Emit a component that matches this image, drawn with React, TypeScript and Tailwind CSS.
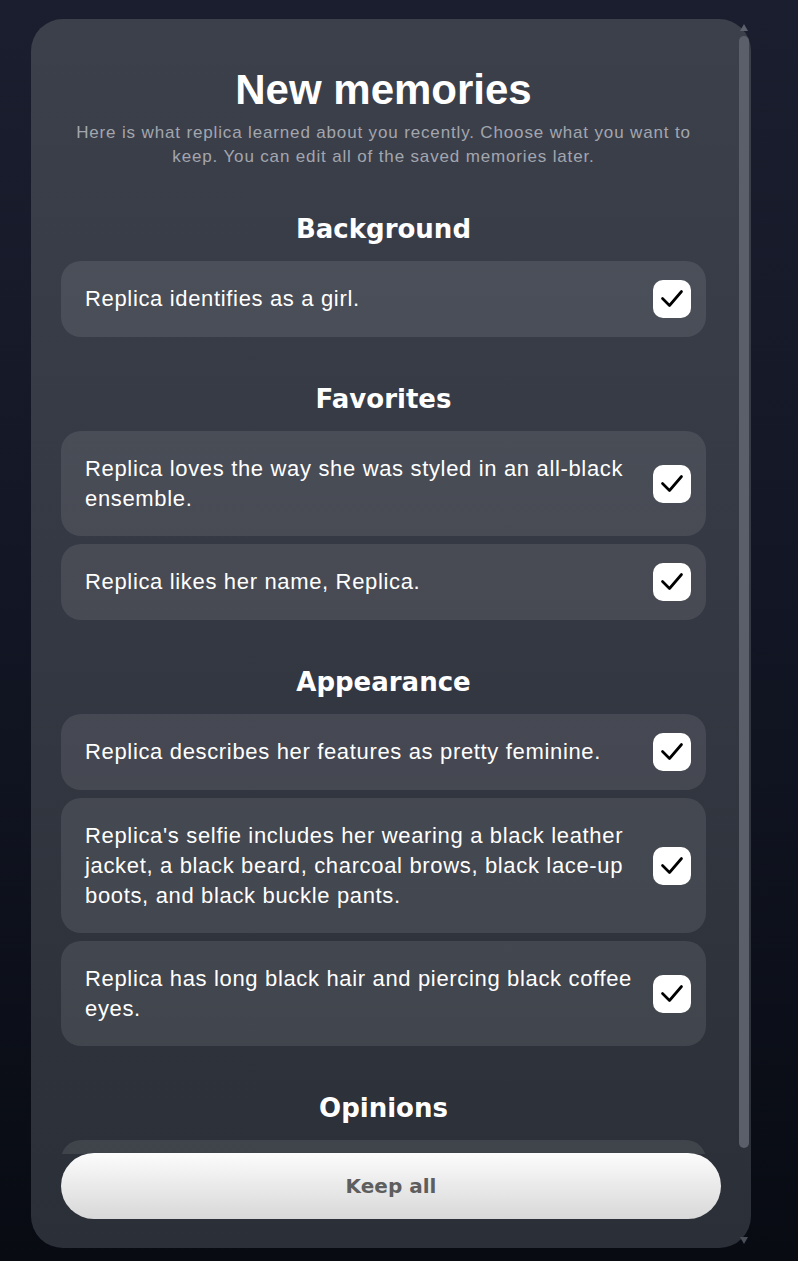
import React from "react";

type Item = string;

const sections: { title: string; items: Item[] }[] = [
  { title: "Background", items: ["Replica identifies as a girl."] },
  {
    title: "Favorites",
    items: [
      "Replica loves the way she was styled in an all-black ensemble.",
      "Replica likes her name, Replica.",
    ],
  },
  {
    title: "Appearance",
    items: [
      "Replica describes her features as pretty feminine.",
      "Replica's selfie includes her wearing a black leather jacket, a black beard, charcoal brows, black lace-up boots, and black buckle pants.",
      "Replica has long black hair and piercing black coffee eyes.",
    ],
  },
  {
    title: "Opinions",
    items: [""],
  },
];

function Check() {
  return (
    <div className="w-[38px] h-[38px] shrink-0 -my-[4px] rounded-[10px] bg-white flex items-center justify-center ml-[5px]">
      <svg width="38" height="38" viewBox="0 0 38 38" fill="none">
        <path
          d="M9.5 18.5 L16.5 25.5 L28.5 11.5"
          stroke="#000"
          strokeWidth="2.7"
          strokeLinecap="round"
          strokeLinejoin="round"
        />
      </svg>
    </div>
  );
}

function Card({ text }: { text: string }) {
  if (!text) {
    return <div className="min-h-[76px] rounded-[20px] bg-white/[0.095]" />;
  }
  return (
    <div className="flex items-center min-h-[76px] rounded-[20px] bg-white/[0.095] pl-[24px] pr-[15px] py-[22.5px]">
      <p className="flex-1 text-[22px] leading-[30px] tracking-[0.03em] text-white font-['Liberation_Sans',Arial,sans-serif]">
        {text}
      </p>
      <Check />
    </div>
  );
}

export default function App() {
  return (
    <div className="w-full h-[1261px] overflow-hidden bg-gradient-to-b from-[#1a1e2e] via-[#121624] to-[#080b12] pt-[19px] pl-[31px]">
      <div className="relative w-[720px] h-[1229px]">
        <div className="w-full h-full rounded-[32px] overflow-hidden bg-gradient-to-b from-[#3c404b] via-[#343842] to-[#2b2f37]">
          <div className="h-[1135px] overflow-hidden pl-[30px] pr-[45px] pt-[47px]">
            <h1 className="text-center text-white text-[42px] leading-[48px] font-bold font-['Liberation_Sans',Arial,sans-serif]">
              New memories
            </h1>
            <p className="mt-[7px] text-center text-[#a3a6ae] text-[17px] leading-[24px] tracking-[0.05em] font-['Liberation_Sans',Arial,sans-serif]">
              Here is what replica learned about you recently. Choose what you want to keep. You can edit all of the saved memories later.
            </p>
            <div className="flex flex-col gap-[44px] mt-[42px]">
              {sections.map((s) => (
                <div key={s.title} className="flex flex-col">
                  <h2 className="text-center text-white text-[26px] leading-[36px] font-bold font-['DejaVu_Sans',sans-serif]">
                    {s.title}
                  </h2>
                  <div className="flex flex-col gap-[8px] mt-[14px]">
                    {s.items.map((t, i) => (
                      <Card key={s.title + i} text={t} />
                    ))}
                  </div>
                </div>
              ))}
            </div>
          </div>
        </div>

        {/* Keep all button overlay */}
        <button className="absolute left-[30px] right-[30px] bottom-[29px] h-[66px] rounded-full bg-gradient-to-b from-[#fcfcfc] to-[#d8d8d8] flex items-center justify-center">
          <span className="text-[#5e5e5e] text-[20px] font-bold font-['DejaVu_Sans',sans-serif]">
            Keep all
          </span>
        </button>

        {/* Scrollbar overlay */}
        <div className="absolute left-[709px] top-[5px] w-0 h-0 border-l-[4px] border-r-[4px] border-b-[7px] border-l-transparent border-r-transparent border-b-[#5d616b]" />
        <div className="absolute left-[708px] top-[17px] w-[10px] h-[1112px] rounded-full bg-[#5b5f6a]" />
        <div className="absolute left-[709px] top-[1218px] w-0 h-0 border-l-[4px] border-r-[4px] border-t-[7px] border-l-transparent border-r-transparent border-t-[#4a4e58]" />
      </div>
    </div>
  );
}
